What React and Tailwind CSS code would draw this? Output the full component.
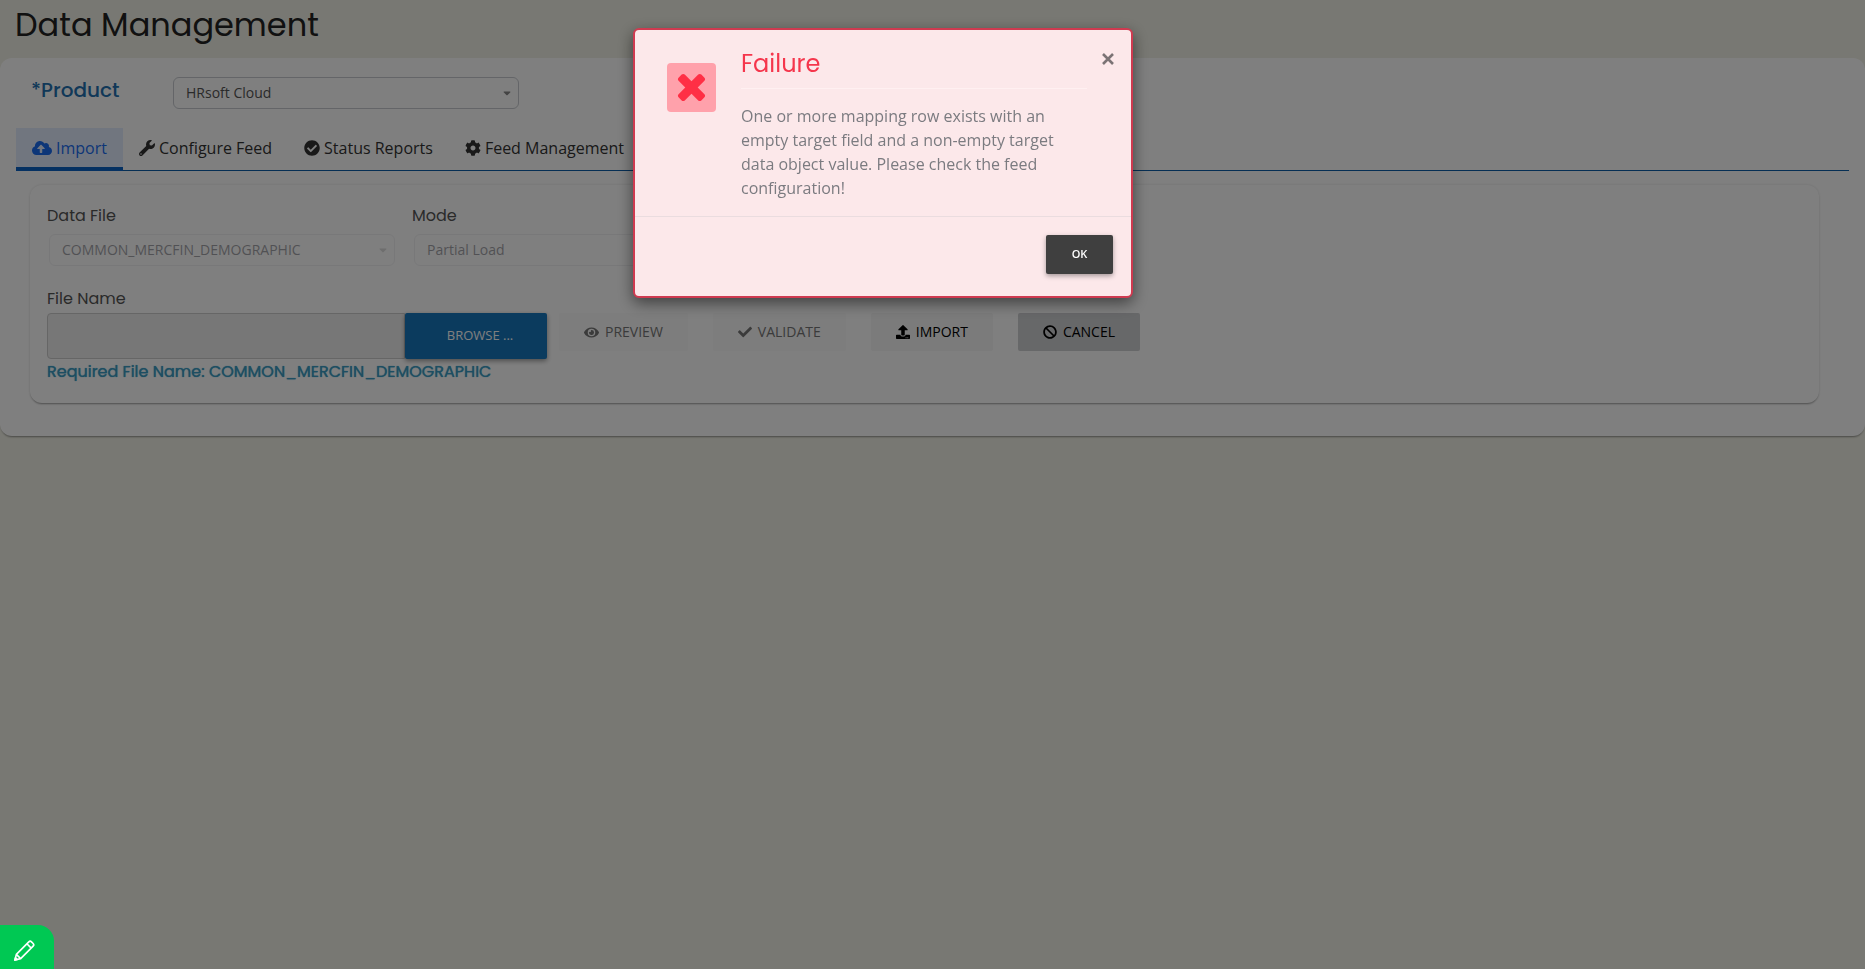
import { FaCloudUploadAlt, FaWrench, FaCheckCircle, FaCog, FaEye, FaCheck, FaUpload, FaBan, FaCaretDown } from 'react-icons/fa'

const HEAD = 'font-[Poppins,Inter,sans-serif]'

const tabs = [
  { label: 'Import', Icon: FaCloudUploadAlt, active: true, size: 20 },
  { label: 'Configure Feed', Icon: FaWrench, size: 16 },
  { label: 'Status Reports', Icon: FaCheckCircle, size: 16 },
  { label: 'Feed Management', Icon: FaCog, size: 16 },
]

function Select({ id, value, disabled }) {
  return (
    <div className={`relative w-[346px] ${disabled ? 'opacity-50' : ''}`}>
      <select
        id={id}
        disabled={disabled}
        defaultValue={value}
        className={`h-8 w-full appearance-none rounded-md border bg-white pr-8 pl-3 text-sm ${
          disabled ? 'border-[#e4e4e8] text-[#4a4a55]' : 'border-[#c8cbd0] text-[#555]'
        }`}
      >
        <option>{value}</option>
      </select>
      <FaCaretDown
        size={12}
        className={`pointer-events-none absolute top-2.5 right-1.5 ${disabled ? 'text-[#bbb]' : 'text-[#888]'}`}
      />
    </div>
  )
}

function ActionButton({ Icon, size = 14, label, disabled, className }) {
  return (
    <button
      type="button"
      disabled={disabled}
      className={`flex h-[38px] items-center gap-1.5 rounded-xs px-[25px] text-sm ${className}`}
    >
      <Icon size={size} />
      {label}
    </button>
  )
}

function FailureDialog() {
  return (
    <div className="fixed inset-0 flex items-start justify-center bg-black/50 pt-7 pr-[99px]">
      <div
        role="dialog"
        aria-labelledby="dialog-title"
        className="relative w-[500px] rounded-md border-2 border-[#cf3a50] bg-[#fce8ea] shadow-[0_5px_15px_rgba(0,0,0,0.5)]"
      >
        <div className="flex gap-[25px] pt-[18px] pr-11 pb-4 pl-8">
          <div className="mt-[15px] flex size-[49px] shrink-0 items-center justify-center rounded bg-[#ffa1ab] text-[#ff2f45]">
            <svg viewBox="0 64 1792 1792" width="41" height="41" fill="currentColor">
              <path d="M1490 1322q0 40-28 68l-136 136q-28 28-68 28t-68-28l-294-294-294 294q-28 28-68 28t-68-28l-136-136q-28-28-28-68t28-68l294-294-294-294q-28-28-28-68t28-68l136-136q28-28 68-28t68 28l294 294 294-294q28-28 68-28t68 28l136 136q28 28 28 68t-28 68l-294 294 294 294q28 28 28 68z" />
            </svg>
          </div>
          <div className="flex-1">
            <h2
              id="dialog-title"
              className={`${HEAD} border-b border-[#fff0f1] pb-2 text-2xl leading-8 text-[#f5364c]`}
            >
              Failure
            </h2>
            <p className="mt-[15px] pr-6 text-base leading-6 text-[#7b7b80]">
              One or more mapping row exists with an empty target field and a non-empty target data object value.
              Please check the feed configuration!
            </p>
          </div>
        </div>
        <button type="button" aria-label="Close" className="absolute top-[22px] right-4 text-[#7b7375]">
          <svg viewBox="0 0 14 14" width="14" height="14" fill="none" stroke="currentColor" strokeWidth="2.6">
            <path d="M2 2l10 10M12 2L2 12" />
          </svg>
        </button>
        <div className="flex justify-end border-t border-[#eadcdf] px-[18px] pt-[18px] pb-[22px]">
          <button
            type="button"
            className="h-[39px] w-[67px] rounded-xs bg-[#3f3f3f] text-[11px] font-semibold text-white shadow-[0_2px_5px_rgba(0,0,0,0.35)]"
          >
            OK
          </button>
        </div>
      </div>
    </div>
  )
}

export default function App() {
  return (
    <div className="min-h-screen bg-[#f1f1e6] font-['Open_Sans',sans-serif]">
      <h1 className={`${HEAD} px-[15px] pt-[5px] pb-[13px] text-[32px] leading-10 text-[#222]`}>Data Management</h1>

      <main className="rounded-xl bg-white px-4 pb-[33px] shadow-[0_2px_2px_-1px_rgba(0,0,0,0.4)]">
        <div className="flex items-center pt-[19px] pb-[19px] pl-[15px]">
          <label htmlFor="product" className={`${HEAD} w-[142px] pb-1.5 text-xl leading-6 font-medium text-[#2271b1]`}>
            *Product
          </label>
          <Select id="product" value="HRsoft Cloud" />
        </div>

        <nav className="flex border-b border-[#0d5ea8]">
          {tabs.map(({ label, Icon, active, size }) => (
            <a
              key={label}
              href="#"
              className={`-mb-px flex h-[43px] items-center gap-1 border-b-4 px-4 text-base ${
                active ? 'border-[#0b63c5] bg-[#e3ecff] text-[#1a6cf0]' : 'border-transparent text-[#333]'
              }`}
            >
              <Icon size={size} />
              {label}
            </a>
          ))}
        </nav>

        <section className="mt-3.5 mr-[30px] ml-3.5 rounded-xl bg-white px-[17px] pt-[19px] pb-[19px] shadow-[0_2px_2px_-1px_rgba(0,0,0,0.35),0_0_3px_rgba(0,0,0,0.12)]">
          <div className="flex gap-[17px]">
            <div className="w-[348px]">
              <label htmlFor="data-file" className={`${HEAD} block pb-1.5 text-base text-[#555]`}>
                Data File
              </label>
              <div className="pl-0.5">
                <Select id="data-file" value="COMMON_MERCFIN_DEMOGRAPHIC" disabled />
              </div>
            </div>
            <div className="w-[348px]">
              <label htmlFor="mode" className={`${HEAD} block pb-1.5 text-base text-[#555]`}>
                Mode
              </label>
              <div className="pl-0.5">
                <Select id="mode" value="Partial Load" disabled />
              </div>
            </div>
          </div>

          <label htmlFor="file-name" className={`${HEAD} block pt-[21px] pb-0.5 text-base text-[#555]`}>
            File Name
          </label>
          <div className="flex items-start">
            <input
              id="file-name"
              type="text"
              readOnly
              className="h-[46px] w-[358px] rounded-l-sm border border-[#ccc] bg-[#efefef] px-3"
            />
            <button
              type="button"
              className="h-[46px] w-[142px] rounded-xs bg-[#1676bc] pl-2 text-[13px] text-white shadow-[0_2px_5px_rgba(0,0,0,0.4)]"
            >
              BROWSE ...
            </button>
            <div className="ml-3 flex gap-[25px]">
              <ActionButton Icon={FaEye} size={15} label="PREVIEW" disabled className="bg-[#fafafa] text-[#777]" />
              <ActionButton Icon={FaCheck} label="VALIDATE" disabled className="bg-[#fafafa] text-[#777]" />
              <ActionButton Icon={FaUpload} label="IMPORT" className="bg-[#f6f6f6] text-black" />
              <ActionButton Icon={FaBan} label="CANCEL" className="bg-[#cfd0d3] text-black" />
            </div>
          </div>
          <p className={`${HEAD} pt-px text-base text-[#3a9cc4] [text-shadow:0_0_1px_#3a9cc4]`}>
            Required File Name: COMMON_MERCFIN_DEMOGRAPHIC
          </p>
        </section>
      </main>

      <FailureDialog />

      <button
        type="button"
        aria-label="Edit"
        className="fixed bottom-0 left-0 flex h-11 w-[54px] items-center justify-center rounded-tr-2xl bg-[#00c853] pt-1.5 pr-1.5 text-white"
      >
        <svg viewBox="0 0 24 24" width="23" height="23" fill="none" stroke="currentColor" strokeWidth="1.7" strokeLinejoin="round">
          <path d="M2 22l1.500-6L16.500 3a2 2 0 0 1 2.800 0l1.700 1.700a2 2 0 0 1 0 2.800L8 20.500zM14.500 5l4.500 4.500M3.500 16l4.500 4.500" />
          <path d="M2 22l0.600-2.400 1.800 1.800z" fill="currentColor" />
        </svg>
      </button>
    </div>
  )
}
